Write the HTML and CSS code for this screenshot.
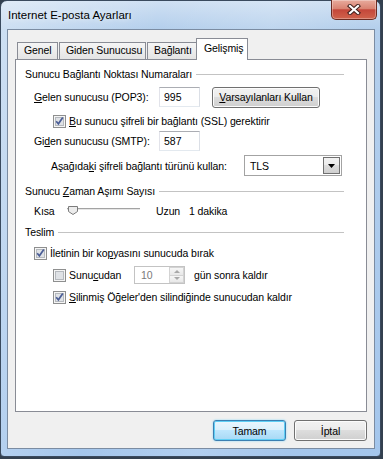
FILE: index.html
```html
<!DOCTYPE html>
<html lang="tr">
<head>
  <meta charset="UTF-8" />
  <meta name="viewport" content="width=device-width, initial-scale=1" />
  <title>Internet E-posta Ayarları</title>
  <link rel="stylesheet" href="styles.css">
</head>
<body>
  <div class="window">
    <div class="titlebar">
      <span class="title">Internet E-posta Ayarları</span>
      <button class="close" aria-label="Kapat">
        <svg width="14" height="11" viewBox="0 0 14 11">
          <path d="M3 2 L11 9 M11 2 L3 9" stroke="#40201c" stroke-width="4.2" stroke-linecap="square" fill="none"/>
          <path d="M3 2 L11 9 M11 2 L3 9" stroke="#fff" stroke-width="2.2" stroke-linecap="square" fill="none"/>
        </svg>
      </button>
    </div>

    <div class="client">
      <div class="tabs">
        <div class="tab tab-genel">Genel</div>
        <div class="tab tab-giden">Giden Sunucusu</div>
        <div class="tab tab-baglanti">Bağlantı</div>
        <div class="tab active">Gelişmiş</div>
      </div>

      <div class="panel">
        <div class="group">
          <span>Sunucu Bağlantı Noktası Numaraları</span><i class="rule"></i>
        </div>

        <div class="row row-gelen indent">
          <label class="lbl lbl-port" for="pop"><u>G</u>elen sunucusu (POP3):</label>
          <input id="pop" class="field" type="text" value="995" />
          <button class="btn btn-defaults"><u>V</u>arsayılanları Kullan</button>
        </div>

        <div class="row row-ssl indent2">
          <svg class="cb" width="13" height="13" viewBox="0 0 13 13">
            <rect x=".5" y=".5" width="12" height="12" fill="#f5f5f5" stroke="#8e8f8f"/>
            <rect x="2.5" y="2.5" width="8" height="8" fill="#dfe2e6" stroke="#b5b9be"/>
            <path d="M3.2 6.3 L5.4 8.8 L9.8 2.6" fill="none" stroke="#4a5d96" stroke-width="1.7"/>
          </svg>
          <span><u>B</u>u sunucu şifreli bir bağlantı (SSL) gerektirir</span>
        </div>

        <div class="row row-giden indent">
          <label class="lbl lbl-port" for="smtp">Gi<u>d</u>en sunucusu (SMTP):</label>
          <input id="smtp" class="field" type="text" value="587" />
        </div>

        <div class="row row-tls indent-tls">
          <span class="lbl lbl-tls">Aşağıda<u>k</u>i şifreli bağlantı türünü kullan:</span>
          <div class="combo">
            <span class="combo-val">TLS</span>
            <span class="combo-drop">
              <svg width="7" height="4" viewBox="0 0 7 4"><path d="M0 0 H7 L3.5 4 Z" fill="#000"/></svg>
            </span>
          </div>
        </div>

        <div class="group group-time">
          <span>Sunucu <u>Z</u>aman Aşımı Sayısı</span><i class="rule"></i>
        </div>

        <div class="row row-slider indent">
          <span class="lbl-short">Kısa</span>
          <svg class="slider" width="74" height="12" viewBox="0 0 74 12">
            <path d="M0 3.5 H73" stroke="#a3a3a3"/>
            <path d="M0 4.5 H73" stroke="#e6e6e6"/>
            <path d="M1.5 1.5 H10.5 V6.5 L6 9.5 L1.5 6.5 Z" fill="#ececec" stroke="#7c7c7c"/>
          </svg>
          <span class="lbl-long">Uzun</span>
          <span>1 dakika</span>
        </div>

        <div class="group group-teslim">
          <span>Teslim</span><i class="rule"></i>
        </div>

        <div class="row row-copy indent">
          <svg class="cb" width="13" height="13" viewBox="0 0 13 13">
            <rect x=".5" y=".5" width="12" height="12" fill="#f5f5f5" stroke="#8e8f8f"/>
            <rect x="2.5" y="2.5" width="8" height="8" fill="#dfe2e6" stroke="#b5b9be"/>
            <path d="M3.2 6.3 L5.4 8.8 L9.8 2.6" fill="none" stroke="#4a5d96" stroke-width="1.7"/>
          </svg>
          <span>İletinin bir ko<u>p</u>yasını sunucuda bırak</span>
        </div>

        <div class="row row-days indent2">
          <svg class="cb" width="13" height="13" viewBox="0 0 13 13">
            <rect x=".5" y=".5" width="12" height="12" fill="#f5f5f5" stroke="#8e8f8f"/>
            <rect x="2.5" y="2.5" width="8" height="8" fill="#dfe2e6" stroke="#b5b9be"/>
          </svg>
          <span class="lbl-days">Sunu<u>c</u>udan</span>
          <div class="spin">
            <span class="spin-val">10</span>
            <span class="spin-btns">
              <span class="spin-btn"><i class="arrow-up"></i></span>
              <span class="spin-btn"><i class="arrow-down"></i></span>
            </span>
          </div>
          <span class="lbl-after">gün sonra kaldır</span>
        </div>

        <div class="row row-deleted indent2">
          <svg class="cb" width="13" height="13" viewBox="0 0 13 13">
            <rect x=".5" y=".5" width="12" height="12" fill="#f5f5f5" stroke="#8e8f8f"/>
            <rect x="2.5" y="2.5" width="8" height="8" fill="#dfe2e6" stroke="#b5b9be"/>
            <path d="M3.2 6.3 L5.4 8.8 L9.8 2.6" fill="none" stroke="#4a5d96" stroke-width="1.7"/>
          </svg>
          <span><u>S</u>ilinmiş Öğeler'den silindiğinde sunucudan kaldır</span>
        </div>
      </div>

      <div class="actions">
        <button class="btn btn-action default">Tamam</button>
        <button class="btn btn-action">İptal</button>
      </div>
    </div>
  </div>
</body>
</html>
```

FILE: styles.css
```css
body {
  margin: 0;
  background: #33404f;
  font-family: "Liberation Sans", "Noto Sans", sans-serif;
  font-size: 10.5px;
  letter-spacing: -0.1px;
  color: #000;
}

.window {
  width: 381px;
  height: 457px;
  box-sizing: border-box;
  border: 1px solid #3a4a5e;
  border-radius: 7px 7px 4px 4px;
  background:
    linear-gradient(100deg, rgba(255,255,255,0.35) 0, rgba(255,255,255,0) 35%, rgba(255,255,255,0.15) 60%, rgba(255,255,255,0) 80%),
    linear-gradient(180deg, #cfe0f3 0, #b4cfec 28px, #a4c6ec 100%);
  padding: 0 5px 7px 6px;
  display: flex;
  flex-direction: column;
}

.titlebar {
  height: 28px;
  display: flex;
  align-items: center;
  padding-left: 1px;
}

.title {
  flex: 1;
  font-size: 11.5px;
  letter-spacing: 0;
  text-shadow: 0 0 6px rgba(255,255,255,0.9);
}

.close {
  align-self: flex-start;
  margin-top: -1px;
  margin-right: -2px;
  width: 46px;
  height: 20px;
  padding: 0;
  border: 1px solid #6b2b22;
  border-top: none;
  border-radius: 0 0 5px 5px;
  background: linear-gradient(180deg, #e8ab9d 0, #d98372 45%, #c4473a 52%, #d0634c 100%);
  box-shadow: inset 0 0 0 1px rgba(255,255,255,0.3);
  display: flex;
  align-items: center;
  justify-content: center;
}

.client {
  flex: 1;
  border: 1px solid #7b8ca2;
  background: #f0f0f0;
  padding: 8px 7px 7px;
  display: flex;
  flex-direction: column;
}

/* tabs */
.tabs {
  position: relative;
  z-index: 1;
  height: 22px;
  margin-bottom: -1px;
  padding-left: 2px;
  display: flex;
  align-items: flex-end;
}

.tab {
  box-sizing: border-box;
  height: 17px;
  margin-bottom: 1px;
  border: 1px solid #898c95;
  border-bottom: none;
  background: linear-gradient(180deg, #f5f5f5, #e4e4e4);
  padding-left: 6px;
  line-height: 15px;
  white-space: nowrap;
  overflow: hidden;
}

.tab-genel { width: 41px; margin-right: 1px; }
.tab-giden { width: 87px; margin-right: 1px; }
.tab-baglanti { width: 50px; }

.tab.active {
  width: 52px;
  height: 22px;
  margin-left: -1px;
  margin-bottom: 0;
  background: #fff;
  padding: 2px 0 0 7px;
}

/* panel */
.panel {
  box-sizing: border-box;
  height: 353px;
  border: 1px solid #898c95;
  background: #fff;
  padding: 6px 22px 0 9px;
}

.group {
  height: 16px;
  display: flex;
  align-items: center;
  white-space: nowrap;
}

.group .rule {
  flex: 1;
  height: 1px;
  margin-left: 4px;
  background: #c3c3c3;
}

.group-time { margin-top: 7px; }
.group-teslim { margin-top: 5px; }

.row {
  display: flex;
  align-items: center;
  white-space: nowrap;
}

.indent { padding-left: 9px; }
.indent2 { padding-left: 28px; }
.indent-tls { padding-left: 26px; }

.row-gelen { height: 22px; margin-top: 4px; }
.row-ssl { height: 16px; margin-top: 5px; }
.row-giden { height: 20px; margin-top: 2px; }
.row-tls { height: 21px; margin-top: 4px; }
.row-slider { height: 16px; margin-top: 4px; }
.row-copy { height: 16px; margin-top: 5px; }
.row-days { height: 18px; margin-top: 5px; }
.row-deleted { height: 16px; margin-top: 5px; }

.lbl-port { width: 125px; }
.lbl-tls { width: 193px; }

.cb {
  flex: none;
  margin-right: 3px;
}

.field {
  box-sizing: border-box;
  width: 41px;
  height: 20px;
  margin: 0;
  padding: 0 4px;
  border: 1px solid;
  border-color: #abadb3 #dbdfe6 #e3e9ef #e2e3ea;
  background: #fff;
  font: inherit;
  color: #000;
  outline: none;
}

/* buttons */
.btn {
  box-sizing: border-box;
  height: 21px;
  padding: 0;
  border: 1px solid #707070;
  border-radius: 3px;
  background: linear-gradient(180deg, #f2f2f2 0, #ebebeb 50%, #dddddd 50%, #cfcfcf 100%);
  box-shadow: inset 0 0 0 1px #fcfcfc;
  font: inherit;
  letter-spacing: inherit;
  color: #000;
}

.btn-defaults {
  width: 108px;
  margin-left: 12px;
}

.actions {
  margin-top: 8px;
  display: flex;
  justify-content: flex-end;
  gap: 8px;
}

.btn-action { width: 73px; }

.btn.default {
  border-color: #3c7fb1;
  background: linear-gradient(180deg, #eaf6fd 0, #d9f0fc 50%, #bee6fd 50%, #a7d9f5 100%);
  box-shadow: inset 0 0 0 1px #5fcff5, 0 0 2px #7fd3f5;
}

/* combo */
.combo {
  box-sizing: border-box;
  width: 98px;
  height: 21px;
  border: 1px solid #a3a3a3;
  background: #fff;
  padding: 1px;
  display: flex;
  align-items: center;
}

.combo-val {
  flex: 1;
  padding-left: 4px;
}

.combo-drop {
  box-sizing: border-box;
  width: 17px;
  height: 17px;
  border: 1px solid #707070;
  background: linear-gradient(180deg, #f2f2f2 0, #ebebeb 50%, #dddddd 50%, #cfcfcf 100%);
  display: flex;
  align-items: center;
  justify-content: center;
}

/* slider */
.lbl-short { width: 33px; }
.slider { flex: none; }
.lbl-long { width: 33px; margin-left: 15px; }

/* spin box */
.lbl-days { width: 65px; }

.spin {
  box-sizing: border-box;
  width: 51px;
  height: 18px;
  border: 1px solid #c3c3c3;
  background: #fff;
  display: flex;
}

.spin-val {
  flex: 1;
  padding-left: 6px;
  line-height: 16px;
  color: #7a7a7a;
}

.spin-btns {
  width: 15px;
  display: flex;
  flex-direction: column;
}

.spin-btn {
  flex: 1;
  border: 1px solid #d3d3d3;
  background: linear-gradient(180deg, #f6f6f6, #e8e8e8);
  display: flex;
  align-items: center;
  justify-content: center;
}

.spin-btn + .spin-btn { border-top: none; }

.arrow-up,
.arrow-down {
  width: 0;
  height: 0;
  border-left: 3px solid transparent;
  border-right: 3px solid transparent;
}

.arrow-up { border-bottom: 3px solid #a8a8a8; }
.arrow-down { border-top: 3px solid #a8a8a8; }

.lbl-after { margin-left: 9px; }
```
